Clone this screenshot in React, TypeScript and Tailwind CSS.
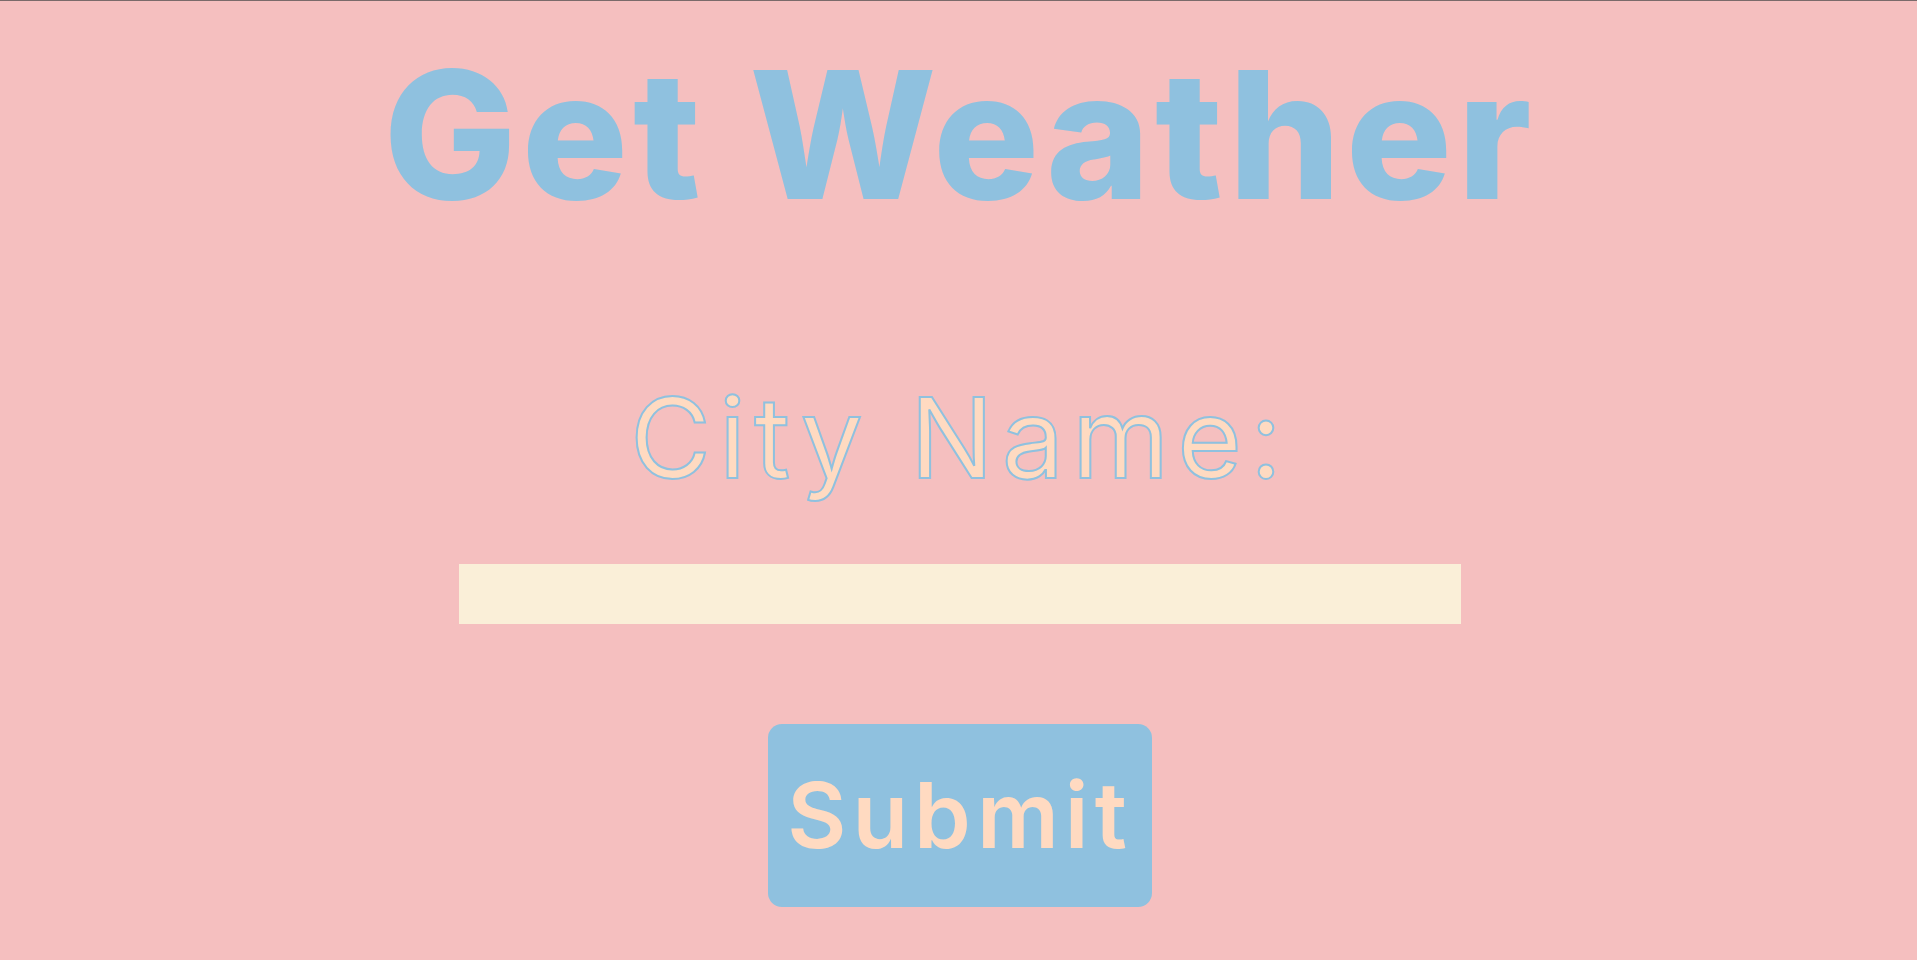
const App = () => {
  return (
    <div className="min-h-[960px] w-full bg-[#f5bfbf] border-t border-[#7a6a6a] flex flex-col items-center pl-[3px] font-['Inter','Liberation_Sans',sans-serif]">
      <h1 className="mt-[46px] text-[177px] leading-none font-extrabold text-[#8fc1df] tracking-[5px]">
        Get Weather
      </h1>
      <label
        htmlFor="city"
        className="mt-[158px] text-[111px] leading-none font-normal text-[#ffdac1] tracking-[8px] [-webkit-text-stroke:2px_#8fc1df]"
      >
        City Name:
      </label>
      <input
        id="city"
        type="text"
        className="mt-[71px] w-[1002px] h-[60px] bg-[#faefd8] outline-none border-none px-4 text-2xl"
      />
      <button className="mt-[100px] w-[384px] h-[183px] rounded-[14px] bg-[#8fc1df] text-[#ffdac1] text-[91px] leading-none font-semibold tracking-[6px] flex items-center justify-center">
        Submit
      </button>
    </div>
  );
};

export default App;
